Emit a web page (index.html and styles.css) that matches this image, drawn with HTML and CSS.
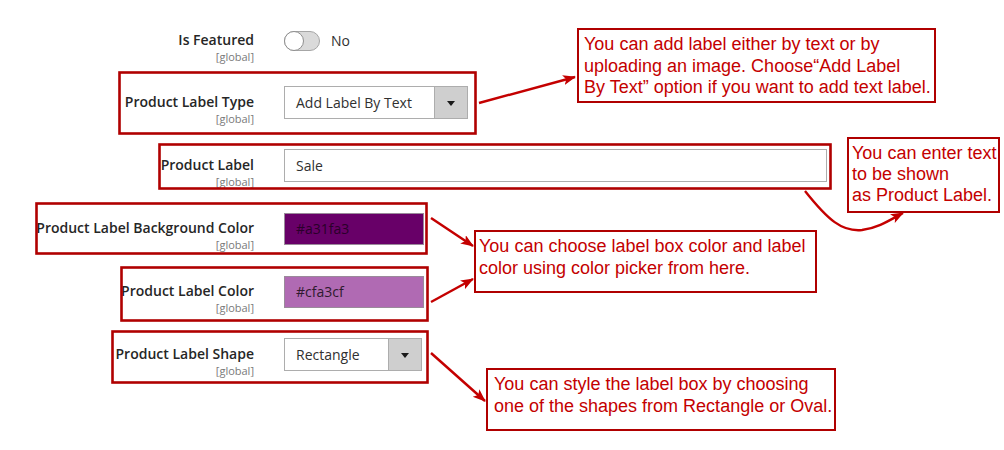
FILE: index.html
```html
<!DOCTYPE html>
<html lang="en">
<head>
    <meta charset="UTF-8">
    <meta name="viewport" content="width=device-width, initial-scale=1.0">
    <title>Product Label Settings</title>
    <link rel="stylesheet" href="styles.css">
</head>
<body>
    <div class="page">
        <form class="fields">
            <div class="field">
                <div class="label"><span class="title">Is Featured</span><span class="scope">[global]</span></div>
                <div class="control">
                    <span class="toggle"></span>
                    <span class="toggle-text">No</span>
                </div>
            </div>

            <div class="field">
                <div class="label"><span class="title">Product Label Type</span><span class="scope">[global]</span></div>
                <div class="control">
                    <div class="select select-type">
                        <span class="select-value">Add Label By Text</span>
                        <span class="select-btn"></span>
                    </div>
                </div>
            </div>

            <div class="field">
                <div class="label"><span class="title">Product Label</span><span class="scope">[global]</span></div>
                <div class="control">
                    <div class="input">Sale</div>
                </div>
            </div>

            <div class="field">
                <div class="label"><span class="title">Product Label Background Color</span><span class="scope">[global]</span></div>
                <div class="control">
                    <div class="swatch swatch-bg">#a31fa3</div>
                </div>
            </div>

            <div class="field">
                <div class="label"><span class="title">Product Label Color</span><span class="scope">[global]</span></div>
                <div class="control">
                    <div class="swatch swatch-text">#cfa3cf</div>
                </div>
            </div>

            <div class="field">
                <div class="label"><span class="title">Product Label Shape</span><span class="scope">[global]</span></div>
                <div class="control">
                    <div class="select select-shape">
                        <span class="select-value">Rectangle</span>
                        <span class="select-btn"></span>
                    </div>
                </div>
            </div>
        </form>

        <!-- marcas rojas sobre la captura -->
        <svg class="marks" width="1004" height="450" viewBox="0 0 1004 450">
            <defs>
                <marker id="head" markerUnits="userSpaceOnUse" markerWidth="14" markerHeight="12" refX="12" refY="5" orient="auto">
                    <path d="M0,0 L13,5 L0,10 L3,5 Z" fill="#c40000"/>
                </marker>
            </defs>
            <g fill="none" stroke="#b00000" stroke-width="2.6">
                <rect x="119.5" y="72.5" width="356" height="61"/>
                <rect x="159.5" y="144.5" width="671" height="44"/>
                <rect x="36.5" y="203.5" width="390" height="50"/>
                <rect x="121.5" y="267.5" width="306" height="53"/>
                <rect x="112.5" y="331.5" width="315" height="51"/>
            </g>
            <g fill="none" stroke="#c40000" stroke-width="2.4" marker-end="url(#head)">
                <line x1="479" y1="103" x2="575" y2="77"/>
                <path d="M805,191 C828,220 842,232 862,230 C878,228 890,220 903,213"/>
                <line x1="431" y1="218" x2="473" y2="246"/>
                <line x1="431" y1="302" x2="473" y2="279"/>
                <line x1="431" y1="353" x2="485" y2="401"/>
            </g>
        </svg>

        <div class="note note-type">You can add label either by text or by<br>uploading an image. Choose“Add Label<br>By Text” option if you want to add text label.</div>
        <div class="note note-label">You can enter text<br>to be shown<br>as Product Label.</div>
        <div class="note note-color">You can choose label box color and label color using color picker from here.</div>
        <div class="note note-shape">You can style the label box by choosing one of the shapes from Rectangle or Oval.</div>
    </div>
</body>
</html>
```

FILE: styles.css
```css
/* Pagina */
body {
    margin: 0;
    padding: 0;
    background-color: #ffffff;
    font-family: 'Open Sans', 'Liberation Sans', sans-serif;
    color: #303030;
}

.page {
    position: relative;
    width: 1004px;
    height: 450px;
    overflow: hidden;
}

/* Formulario */
.fields {
    margin: 0;
    padding-top: 24px;
}

.field {
    display: flex;
    align-items: flex-start;
    gap: 30px;
    height: 33px;
    margin-bottom: 30px;
}

.field:first-child {
    margin-bottom: 29px;
}

.label {
    width: 254px;
    padding-top: 6px;
    display: flex;
    flex-direction: column;
    align-items: flex-end;
    text-align: right;
}

.title {
    font-size: 14px;
    font-weight: 600;
    line-height: 20px;
    color: #262626;
}

.scope {
    font-size: 11px;
    line-height: 13px;
    color: #7a7a7a;
}

.control {
    height: 33px;
    display: flex;
    align-items: center;
}

/* Interruptor */
.toggle {
    position: relative;
    width: 36px;
    height: 20px;
    box-sizing: border-box;
    border: 1px solid #a6a6a6;
    border-radius: 10px;
    background-color: #dadada;
}

.toggle::before {
    content: "";
    position: absolute;
    top: -1px;
    left: -1px;
    width: 20px;
    height: 20px;
    box-sizing: border-box;
    border: 1px solid #8f8f8f;
    border-radius: 50%;
    background-color: #ffffff;
}

.toggle-text {
    margin-left: 11px;
    font-size: 14px;
}

/* Selects */
.select {
    height: 33px;
    box-sizing: border-box;
    border: 1px solid #adadad;
    background-color: #ffffff;
    display: flex;
    align-items: stretch;
}

.select-type {
    width: 184px;
}

.select-shape {
    width: 138px;
}

.select-value {
    flex: 1;
    padding-left: 11px;
    font-size: 14px;
    line-height: 31px;
}

.select-btn {
    width: 32px;
    border-left: 1px solid #adadad;
    background-color: #cfcfcf;
    display: flex;
    justify-content: center;
    align-items: center;
}

.select-btn::after {
    content: "";
    border-left: 4px solid transparent;
    border-right: 4px solid transparent;
    border-top: 5px solid #1a1a1a;
    margin-top: 1px;
}

/* Campo de texto */
.input {
    width: 543px;
    height: 33px;
    box-sizing: border-box;
    border: 1px solid #adadad;
    padding-left: 11px;
    font-size: 14px;
    line-height: 31px;
}

/* Muestras de color */
.swatch {
    width: 140px;
    height: 32px;
    box-sizing: border-box;
    border: 1px solid #9a8a9a;
    padding-left: 11px;
    font-size: 14px;
    line-height: 30px;
}

.swatch-bg {
    background-color: #680068;
    color: #2a002a;
}

.swatch-text {
    background-color: #b06ab3;
    color: #2e1a2e;
}

/* Anotaciones */
.marks {
    position: absolute;
    top: 0;
    left: 0;
    pointer-events: none;
}

.note {
    position: absolute;
    box-sizing: border-box;
    border: 2.6px solid #b00000;
    padding: 4px 0 0 5px;
    background-color: #ffffff;
    font-family: 'Liberation Sans', Arial, sans-serif;
    font-size: 18px;
    line-height: 21.5px;
    color: #c40000;
}

.note-type {
    left: 577px;
    top: 28px;
    width: 359px;
    height: 75px;
    white-space: nowrap;
}

.note-label {
    left: 847px;
    top: 137px;
    width: 153px;
    height: 76px;
    padding-left: 3px;
    line-height: 21px;
    white-space: nowrap;
}

.note-color {
    left: 474px;
    top: 230px;
    width: 343px;
    height: 63px;
    padding-left: 3px;
}

.note-shape {
    left: 486px;
    top: 368px;
    width: 350px;
    height: 63px;
    padding-left: 6px;
}
```
